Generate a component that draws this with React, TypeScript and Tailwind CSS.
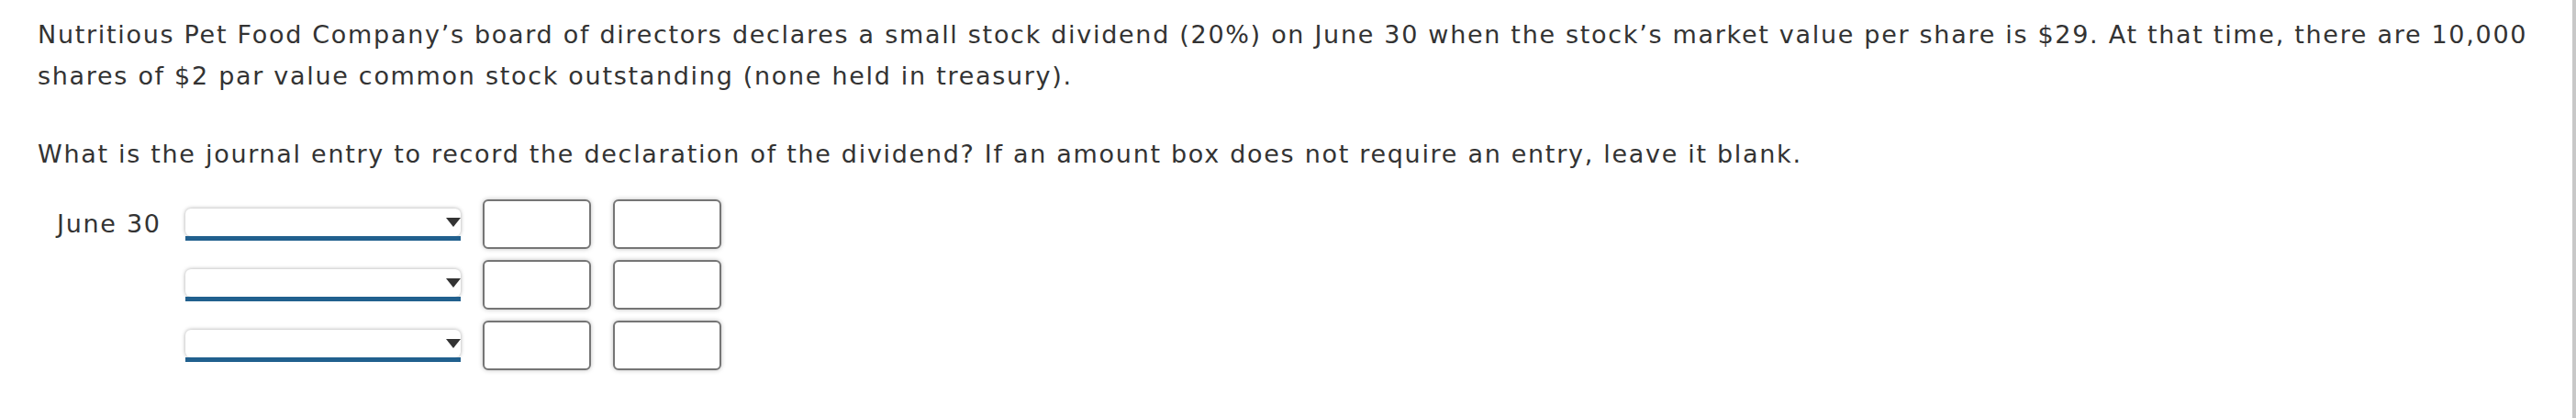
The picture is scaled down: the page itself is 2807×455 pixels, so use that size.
const rows = [
  { label: 'June 30' },
  { label: '' },
  { label: '' },
];

function AccountSelect() {
  return (
    <div className="relative flex flex-col">
      <div className="h-[30px] rounded-[6px] bg-white shadow-[0_0_4px_rgba(0,0,0,0.35)]" />
      <div className="h-[5px] bg-[#21608e]" />
      <svg className="absolute right-0 top-[10px]" width="17" height="10" viewBox="0 0 17 10">
        <polygon points="1,0 17,0 9,10" fill="#333333" />
      </svg>
    </div>
  );
}

function AmountBox() {
  return (
    <div className="h-[54px] rounded-[6px] border-2 border-[#757575] bg-white shadow-[0_0_5px_rgba(0,0,0,0.25)]" />
  );
}

export default function App() {
  return (
    <div className="flex h-[455px] w-[2807px] bg-white text-[#333333]" style={{ fontFamily: '"DejaVu Sans", Verdana, sans-serif' }}>
      <div className="flex-1 pl-[41px] pt-[15px] text-[27px] leading-[45px] tracking-[1.7px]">
        <p>
          Nutritious Pet Food Company’s board of directors declares a small stock dividend (20%) on June 30 when the stock’s market value per share is $29. At that time, there are 10,000 shares of $2 par value common stock outstanding (none held in treasury).
        </p>
        <p className="mt-[40px]">
          What is the journal entry to record the declaration of the dividend? If an amount box does not require an entry, leave it blank.
        </p>

        {/* Journal entry grid */}
        <div className="mt-[27px] grid grid-cols-[137px_300px_118px_118px] grid-rows-[54px_54px_54px] items-center gap-x-[24px] gap-y-[12px]">
          {rows.map((r, i) => (
            <div key={i} className="contents">
              <div className="pl-[21px] leading-[30px]">{r.label}</div>
              <AccountSelect />
              <AmountBox />
              <AmountBox />
            </div>
          ))}
        </div>
      </div>
      <div className="w-[4px] bg-[#c8c8c8]" />
    </div>
  );
}
